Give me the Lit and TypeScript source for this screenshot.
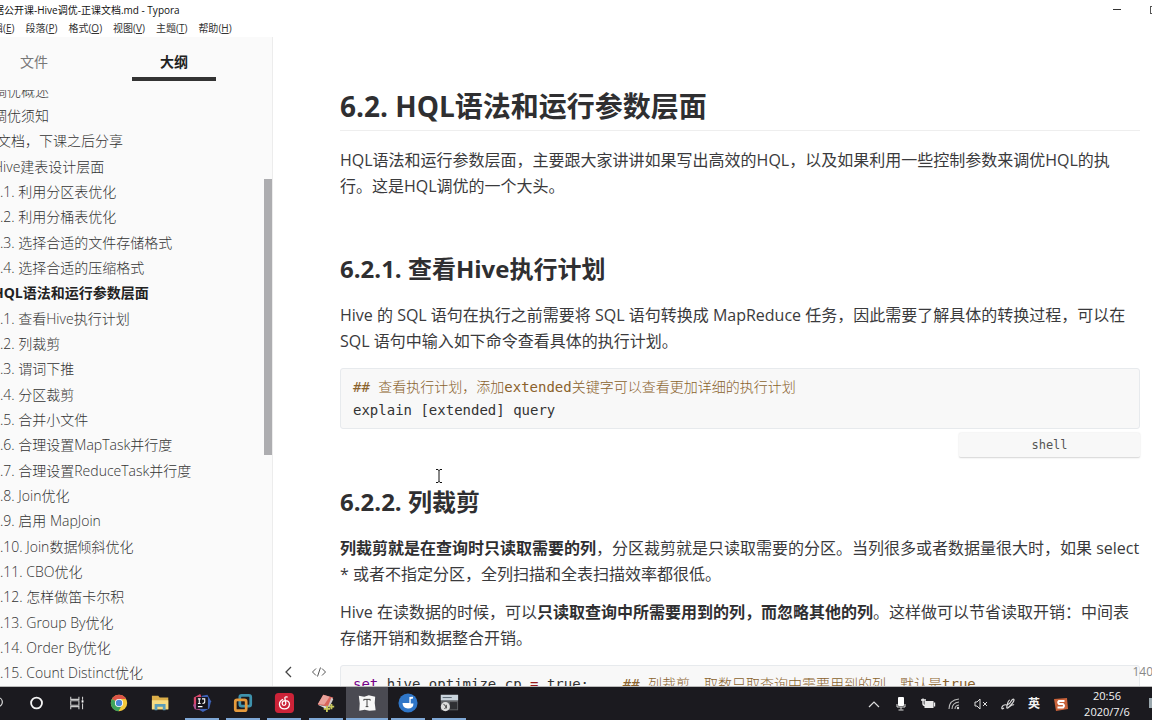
import { LitElement, html, css, svg } from "lit";
import { customElement, state } from "lit/decorators.js";
import { classMap } from "lit/directives/class-map.js";

interface OutlineItem {
  text: string;
  level: "top" | "note" | "sub";
}

const OUTLINE: OutlineItem[] = [
  { text: "调优概述", level: "top" },
  { text: "调优须知", level: "top" },
  { text: "文档，下课之后分享", level: "note" },
  { text: "Hive建表设计层面", level: "top" },
  { text: ".1. 利用分区表优化", level: "sub" },
  { text: ".2. 利用分桶表优化", level: "sub" },
  { text: ".3. 选择合适的文件存储格式", level: "sub" },
  { text: ".4. 选择合适的压缩格式", level: "sub" },
  { text: "HQL语法和运行参数层面", level: "top" },
  { text: ".1. 查看Hive执行计划", level: "sub" },
  { text: ".2. 列裁剪", level: "sub" },
  { text: ".3. 谓词下推", level: "sub" },
  { text: ".4. 分区裁剪", level: "sub" },
  { text: ".5. 合并小文件", level: "sub" },
  { text: ".6. 合理设置MapTask并行度", level: "sub" },
  { text: ".7. 合理设置ReduceTask并行度", level: "sub" },
  { text: ".8. Join优化", level: "sub" },
  { text: ".9. 启用 MapJoin", level: "sub" },
  { text: ".10. Join数据倾斜优化", level: "sub" },
  { text: ".11. CBO优化", level: "sub" },
  { text: ".12. 怎样做笛卡尔积", level: "sub" },
  { text: ".13. Group By优化", level: "sub" },
  { text: ".14. Order By优化", level: "sub" },
  { text: ".15. Count Distinct优化", level: "sub" },
];

const MENUS = [
  ["编辑", "E"],
  ["段落", "P"],
  ["格式", "O"],
  ["视图", "V"],
  ["主题", "T"],
  ["帮助", "H"],
];

@customElement("title-bar")
export class TitleBar extends LitElement {
  static styles = css`
    :host { display: block; background: #fff; color: #222; }
    .title { display: flex; justify-content: space-between; align-items: center; height: 20px; overflow: hidden; }
    .name { font-size: 10px; line-height: 20px; margin-left: -6px; white-space: nowrap; color: #111; }
    .controls { display: flex; gap: 28px; margin-right: -7px; }
    .control { border: 0; padding: 0; background: none; width: 10px; height: 10px; display: flex; }
    .menus { display: flex; gap: 11px; height: 17px; margin-left: -17px; }
    .menu { border: 0; padding: 0; background: none; font: inherit; font-size: 10px; line-height: 17px; color: #333; white-space: nowrap; }
  `;
  render() {
    return html`
      <div class="title">
        <span class="name">据公开课-Hive调优-正课文档.md - Typora</span>
        <div class="controls">
          <button class="control" aria-label="最小化">
            <svg width="10" height="10"><path d="M2 4.500h8" stroke="#333" /></svg>
          </button>
          <button class="control" aria-label="最大化">
            <svg width="10" height="10"><rect x="1.500" y="1.500" width="7" height="7" fill="none" stroke="#555" /></svg>
          </button>
        </div>
      </div>
      <nav class="menus">
        ${MENUS.map(([name, key]) => html`<button class="menu">${name}(<u>${key}</u>)</button>`)}
      </nav>
    `;
  }
}

@customElement("outline-panel")
export class OutlinePanel extends LitElement {
  @state() private current = 8;

  static styles = css`
    :host { position: relative; display: flex; flex-direction: column; width: 272px; flex: none; background: #fafafa; border-right: 1px solid #ececec; overflow: hidden; color: #333; }
    .tabs { display: flex; height: 53px; flex: none; padding-right: 56px; }
    .tab { border: 0; background: none; font: inherit; font-size: 14px; color: #777; width: 84px; height: 44px; padding: 8px 0 0; box-sizing: border-box; border-bottom: 4px solid transparent; }
    .tab.files { margin-left: -8px; }
    .tab.active { margin-left: auto; color: #222; font-weight: 700; border-bottom-color: #333; }
    .scroll { flex: 1; min-height: 0; overflow: hidden; display: flex; }
    .list { list-style: none; margin: -12px 0 0; padding: 0; flex: 1; display: flex; flex-direction: column; }
    .row { flex: 1; display: flex; align-items: center; font-size: 14px; font-weight: 300; line-height: 24px; min-height: 0; white-space: nowrap; }
    .top { margin-left: -7px; }
    .note { margin-left: -3px; }
    .link { color: inherit; text-decoration: none; }
    .current { font-weight: 700; color: #222; }
    .thumb { position: absolute; right: 0; top: 142px; width: 8px; height: 276px; background: #adadb0; }
  `;
  render() {
    return html`
      <div class="tabs">
        <button class="tab files">文件</button>
        <button class="tab active">大纲</button>
      </div>
      <div class="scroll">
        <ul class="list">
          ${OUTLINE.map(
            (item, i) => html`<li class="row ${item.level}">
              <a class=${classMap({ link: true, current: i === this.current })} href="#s${i}"
                @click=${() => (this.current = i)}>${item.text}</a>
            </li>`
          )}
        </ul>
      </div>
      <div class="thumb"></div>
    `;
  }
}

@customElement("doc-view")
export class DocView extends LitElement {
  static styles = css`
    :host { position: relative; display: block; flex: 1; min-width: 0; overflow: hidden; background: #fff; color: #3a3a3c; }
    .page { padding: 52px 12px 0 67px; font-size: 16px; line-height: 26px; }
    h2, h3 { margin: 0; line-height: 34px; font-weight: 700; color: #2f2f31; }
    h2 { font-size: 28px; padding-bottom: 7px; border-bottom: 1px solid #eee; margin-bottom: 16px; }
    h3 { font-size: 24px; margin-bottom: 16px; }
    p { margin: 0 0 12px; }
    strong { color: #2f2f31; }
    .intro { margin-bottom: 53px; }
    .before-code { margin-bottom: 14px; }
    .code { margin: 0; padding: 7px 12px; background: #f8f8f8; border: 1px solid #e7eaed; border-radius: 3px; font-family: "DejaVu Sans Mono", "Noto Sans CJK SC", monospace; font-size: 14px; line-height: 23px; height: 45px; color: #333; overflow: hidden; }
    .comment { color: #8a622c; }
    .han { font-weight: 300; }
    .keyword { color: #770088; }
    .operator { color: #981a1a; }
    .lang { display: block; box-sizing: border-box; width: 181px; height: 25px; margin: 4px 0 27px auto; border: 0; border-bottom: 1px solid #ddd; border-radius: 2px; background: #f8f8f8; box-shadow: 0 0 2px #ddd; padding: 0; text-align: center; font-family: "DejaVu Sans Mono", monospace; font-size: 12px; color: #555; }
    .tools { position: absolute; left: 8px; bottom: 6px; display: flex; gap: 14px; }
    .tool { border: 0; padding: 0; background: none; width: 16px; height: 16px; display: flex; }
    .count { position: absolute; right: -1px; bottom: 6px; font-size: 12px; line-height: 16px; color: #888; }
    .caret { position: absolute; left: 162px; top: 432px; }
  `;
  render() {
    return html`
      <article class="page">
        <h2>6.2. HQL语法和运行参数层面</h2>
        <p class="intro">HQL语法和运行参数层面，主要跟大家讲讲如果写出高效的HQL，以及如果利用一些控制参数来调优HQL的执行。这是HQL调优的一个大头。</p>
        <h3>6.2.1. 查看Hive执行计划</h3>
        <p class="before-code">Hive 的 SQL 语句在执行之前需要将 SQL 语句转换成 MapReduce 任务，因此需要了解具体的转换过程，可以在 SQL 语句中输入如下命令查看具体的执行计划。</p>
        <pre class="code"><span class="comment">## <span class="han">查看执行计划，添加</span>extended<span class="han">关键字可以查看更加详细的执行计划</span></span>
explain [extended] query</pre>
        <input class="lang" aria-label="代码语言" value="shell" />
        <h3>6.2.2. 列裁剪</h3>
        <p><strong>列裁剪就是在查询时只读取需要的列</strong>，分区裁剪就是只读取需要的分区。当列很多或者数据量很大时，如果 select * 或者不指定分区，全列扫描和全表扫描效率都很低。</p>
        <p class="before-code">Hive 在读数据的时候，可以<strong>只读取查询中所需要用到的列，而忽略其他的列</strong>。这样做可以节省读取开销：中间表存储开销和数据整合开销。</p>
        <pre class="code"><span class="keyword">set</span> hive.optimize.cp <span class="operator">=</span> true;    <span class="comment">## <span class="han">列裁剪，取数只取查询中需要用到的列，默认是</span>true</span></pre>
      </article>
      <svg class="caret" width="8" height="14"><path d="M1 .5h2l1 1l1-1h2M4 1v12M1 13.5h2l1-1l1 1h2" fill="none" stroke="#111" /></svg>
      <div class="tools">
        <button class="tool" aria-label="收起侧边栏">
          <svg width="16" height="16"><path d="M10 3L5 8l5 5" fill="none" stroke="#444" stroke-width="1.3" /></svg>
        </button>
        <button class="tool" aria-label="源代码模式">
          <svg width="16" height="16"><path d="M5 4.5L1.5 8L5 11.500M11 4.500L14.500 8L11 11.500M9.500 3.500L6.500 12.500" fill="none" stroke="#555" /></svg>
        </button>
      </div>
      <span class="count">140</span>
    `;
  }
}

const APPS = [
  { name: "搜索", art: svg`<circle cx="13" cy="10" r="5" fill="none" stroke="#ddd" stroke-width="1.3"/><path d="M9.500 13.500L5 18" stroke="#ddd" stroke-width="1.3"/>` },
  { name: "Cortana", art: svg`<circle cx="10.500" cy="11" r="6" fill="none" stroke="#f4f4f4" stroke-width="2"/>` },
  { name: "任务视图", art: svg`<path d="M3 4v3h9V4M3 18v-3h9v3M3 8.500h9v5H3zM16 4v3.500M16 11.500v6.500" fill="none" stroke="#ccc" stroke-width="1.200"/><rect x="15" y="8" width="2" height="2.500" fill="#fff"/>` },
  { name: "Chrome", art: svg`<circle cx="11" cy="11" r="9" fill="#f3c83c"/><path d="M11 11L3.200 6.500A9 9 0 0 1 18.800 6.500z" fill="#dc5548"/><path d="M3.200 6.500A9 9 0 0 0 10.500 20L14.500 13L11 11z" fill="#3fa35c"/><path d="M11 6.500h7.800L15 13z" fill="#f3c83c"/><circle cx="11" cy="11" r="4.500" fill="#fff"/><circle cx="11" cy="11" r="3.500" fill="#4a86d8"/>` },
  { name: "文件资源管理器", art: svg`<path d="M1 3h7l1.500 2H19v13H1z" fill="#dcae49"/><path d="M1 8h18v10H1z" fill="#f7dc82"/><path d="M4 19v-7h12v7h-3v-4H7v4z" fill="#5a9db8"/>` },
  { name: "IntelliJ IDEA", open: true, art: svg`<path d="M2 5l7-4 3 7-6 7-4-2z" fill="#d8486c"/><path d="M11 3l6-1 4 7-2 8-7 4-5-3z" fill="#3e63b8"/><path d="M1 13l6-2 2 8-6-1z" fill="#b1508f"/><rect x="4.500" y="4.500" width="13" height="13" fill="#15131a"/><path d="M6.500 6.500h3M8 6.500v5M6.500 11.500h3M11 6.500h3v3.500q0 1.500-2.500 1.500M6.500 15h5" fill="none" stroke="#fff" stroke-width="1.200"/>` },
  { name: "VMware", open: true, art: svg`<rect x="7.500" y="2.500" width="12" height="12" rx="2" fill="none" stroke="#3f93ad" stroke-width="3"/><rect x="2.500" y="7.500" width="12" height="12" rx="2" fill="none" stroke="#e59a3c" stroke-width="3"/>` },
  { name: "网易云音乐", open: true, art: svg`<rect x="1" y="0" width="21" height="22" rx="4" fill="#cc2338"/><path d="M15 4.500q-3.500-1-3 1.500l1 5.500q0 2-2 2t-2-2q0-2.500 3-3q5-.5 5 4q-.5 5-5.500 5t-5.500-5q0-4 4-5.500" fill="none" stroke="#fff" stroke-width="1.400"/>` },
  { name: "画图工具", open: true, art: svg`<path d="M8 2l11 3-5 10-12-2z" fill="#d9655c"/><path d="M8 2l7 2-6 9-7-1z" fill="#e9a29b"/><path d="M2 13l12 2-2 3z" fill="#ddd"/><path d="M17 5l2 2-4 8-2 0z" fill="#cfc8c8"/><path d="M12 14v7M8.500 17.500h7M17 12v6M14 15h6" stroke="#c7c75a" stroke-width="2"/>` },
  { name: "Typora", open: true, active: true, art: svg`<path d="M2 3l6 1 5-1.500 7 1.500-.5 7 1 8-7 .5-5-1-6 1 .5-8z" fill="#f7f7f7"/><path d="M7.500 8.500v-1.500h7v1.500M11 7v8M9.500 15h3" fill="none" stroke="#333"/>` },
  { name: "音乐播放器", open: true, art: svg`<circle cx="11" cy="11" r="10.500" fill="#2f76c8"/><path d="M12.500 11V4.500l4-.5v2l-2.500.5v5H17q0 5.500-6 5.500t-6-6z" fill="#fff"/>` },
  { name: "录屏工具", open: true, art: svg`<rect x="2" y="2" width="19" height="17" fill="#606266"/><rect x="2" y="2" width="19" height="6" fill="#c9d3dc"/><path d="M4 5h10" stroke="#54606c"/><rect x="12" y="10" width="8" height="8" fill="#2e2f33"/><circle cx="7" cy="15" r="5" fill="#ddd"/><path d="M5 12l3 3.500-2 2M8 13v4" fill="none" stroke="#333"/>` },
];

const TRAY = [
  { name: "显示隐藏的图标", art: svg`<path d="M3 11l5-5 5 5" fill="none" stroke="#ddd" stroke-width="1.200"/>` },
  { name: "麦克风", art: svg`<rect x="5" y="1" width="6" height="9" rx="1" fill="#fff"/><path d="M4 8v3h8V8M8 11v2.500M5.500 14h5" fill="none" stroke="#ddd"/>` },
  { name: "电池", art: svg`<rect x="4.500" y="5" width="9" height="7" fill="#e8e8e8"/><path d="M14.500 6.500v4M1 4h5M3 2.500v5q0 2 2 2" stroke="#eee" fill="none" stroke-width="1.400"/>` },
  { name: "网络", art: svg`<path d="M3 13Q3 4 13 3M6 13Q6 7 13 6M9 13Q9 9.500 13 9" fill="none" stroke="#bbb" stroke-width="1.100"/><circle cx="12" cy="12" r="1.200" fill="#ddd"/>` },
  { name: "音量", art: svg`<path d="M2 6h2l3-3v10l-3-3H2zM10 6l4 4M14 6l-4 4" fill="none" stroke="#ddd"/>` },
  { name: "手写笔", art: svg`<path d="M5 12q-3 2-2-1t5-2q3-1 5-5 2-2 2 0t-5 7q-3 3-2-1 1-6 3-6M10 11q4-3 5-2" fill="none" stroke="#ddd" stroke-width="1.200"/>` },
];

@customElement("task-bar")
export class TaskBar extends LitElement {
  static styles = css`
    :host { display: flex; justify-content: space-between; height: 33px; flex: none; background: #1b1a1f; border-top: 1px solid #bbb; overflow: hidden; color: #f4f4f4; }
    .apps { display: flex; width: 495px; margin-left: -25px; }
    .app { flex: 1; min-width: 0; margin: 0; border: 0; padding: 0; background: none; display: flex; flex-direction: column; align-items: center; justify-content: space-between; }
    .app.active { background: #4a4a52; }
    .icon { margin-top: 6px; }
    .mark { width: 34px; height: 2px; }
    .open .mark { background: #7fa8d6; }
    .active .mark { width: 100%; }
    .side { display: flex; align-items: center; margin-right: -10px; }
    .tray { display: flex; width: 213px; }
    .item { flex: 1; border: 0; padding: 0; background: none; color: inherit; font: inherit; font-size: 12px; line-height: 16px; font-weight: 700; display: flex; justify-content: center; align-items: center; }
    .clock { width: 66px; text-align: center; font-size: 11px; line-height: 16px; }
    .note { border: 0; padding: 0; background: none; margin-left: 8px; display: flex; }
  `;
  render() {
    return html`
      <div class="apps">
        ${APPS.map(
          (a) => html`<button class=${classMap({ app: true, open: !!a.open, active: !!a.active })} aria-label=${a.name}>
            <svg class="icon" width="20" height="20" viewBox="0 0 22 22">${a.art}</svg>
            <span class="mark"></span>
          </button>`
        )}
      </div>
      <div class="side">
        <div class="tray">
          ${TRAY.map((t) => html`<button class="item" aria-label=${t.name}><svg width="16" height="16">${t.art}</svg></button>`)}
          <button class="item">英</button>
          <button class="item" aria-label="输入法">
            <svg width="14" height="14"><path d="M0 2l13-1 1 11-12 2z" fill="#c8623a" /><path d="M10.500 4H5q-1.500 1.500 0 3h4q2 1.500 0 3.500H3.500" fill="none" stroke="#fff" stroke-width="2" /></svg>
          </button>
        </div>
        <time class="clock">20:56<br />2020/7/6</time>
        <button class="note" aria-label="通知">
          <svg width="14" height="14"><path d="M1 1h12v10H7l-3 3v-3H1z" fill="#9aa7ad" /></svg>
        </button>
      </div>
    `;
  }
}

@customElement("app-root")
export class AppRoot extends LitElement {
  static styles = css`
    :host { display: flex; flex-direction: column; height: 100vh; overflow: hidden; font-family: "Open Sans", "Noto Sans CJK SC", sans-serif; }
    .body { display: flex; flex: 1; min-height: 0; }
  `;
  render() {
    return html`
      <title-bar></title-bar>
      <div class="body">
        <outline-panel></outline-panel>
        <doc-view></doc-view>
      </div>
      <task-bar></task-bar>
    `;
  }
}
